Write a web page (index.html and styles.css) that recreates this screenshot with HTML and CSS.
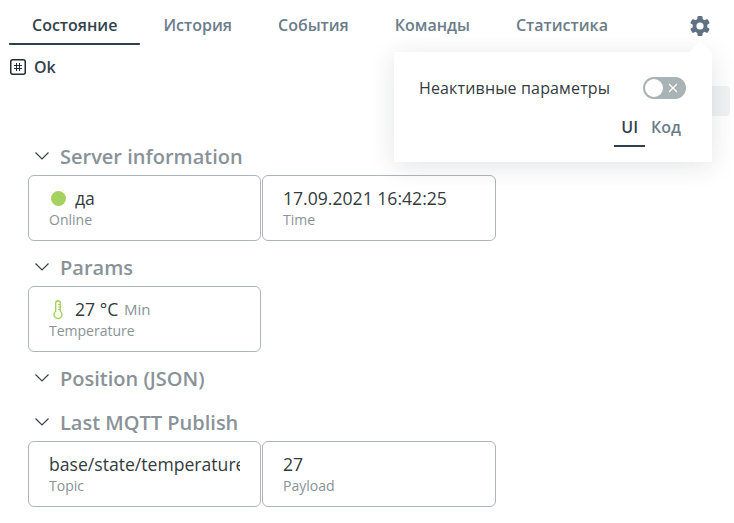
FILE: index.html
```html
<!DOCTYPE html>
<html lang="ru">
<head>
<meta charset="utf-8">
<title>Состояние</title>
<link rel="stylesheet" href="styles.css">
</head>
<body>
<div class="page">
  <nav class="tabs">
    <a class="tab active">Состояние</a>
    <a class="tab">История</a>
    <a class="tab">События</a>
    <a class="tab">Команды</a>
    <a class="tab">Статистика</a>
    <span class="gear">
      <svg width="20" height="20" viewBox="0 0 20 20"><g fill="#5f7183"><circle cx="10" cy="10" r="7.4"/><rect x="7.4" y="0" width="5.2" height="20" rx="1.2"/><rect x="7.4" y="0" width="5.2" height="20" rx="1.2" transform="rotate(60 10 10)"/><rect x="7.4" y="0" width="5.2" height="20" rx="1.2" transform="rotate(120 10 10)"/></g><circle cx="10" cy="10" r="3.6" fill="#fff"/></svg>
    </span>
  </nav>
  <div class="status">
    <svg class="status-icon" width="16" height="16" viewBox="0 0 16 16"><rect x="0.75" y="0.75" width="14.5" height="14.5" rx="2" fill="#fff" stroke="#232c33" stroke-width="1.5"/><path d="M6.5 4v8M9.5 4v8M4 6.5h8M4 9.5h8" stroke="#232c33" stroke-width="1" fill="none"/></svg>
    <span>Ok</span>
  </div>
  <main class="content">
    <section class="group">
      <h2 class="group-title"><svg class="chev" width="16" height="10" viewBox="0 0 16 10"><path d="M1.5 1.5L8 8l6.5-6.5" fill="none" stroke="#36434c" stroke-width="1.2"/></svg>Server information</h2>
      <div class="cards">
        <div class="card">
          <div class="value"><span class="dot"></span>да</div>
          <div class="label">Online</div>
        </div>
        <div class="card">
          <div class="value">17.09.2021 16:42:25</div>
          <div class="label">Time</div>
        </div>
      </div>
    </section>
    <section class="group">
      <h2 class="group-title"><svg class="chev" width="16" height="10" viewBox="0 0 16 10"><path d="M1.5 1.5L8 8l6.5-6.5" fill="none" stroke="#36434c" stroke-width="1.2"/></svg>Params</h2>
      <div class="cards">
        <div class="card">
          <div class="value">
            <svg class="thermo" width="12" height="20" viewBox="0 0 12 20"><path d="M3.7 11.2V3a2.3 2.3 0 0 1 4.6 0v8.2a4 4 0 1 1-4.6 0z" fill="none" stroke="#a5d15f" stroke-width="1.4"/><path d="M6 4.5h2M6 7h2M6 9.5h2" stroke="#a5d15f" stroke-width="1"/></svg>27 °C <span class="unit">Min</span>
          </div>
          <div class="label">Temperature</div>
        </div>
      </div>
    </section>
    <section class="group">
      <h2 class="group-title"><svg class="chev" width="16" height="10" viewBox="0 0 16 10"><path d="M1.5 1.5L8 8l6.5-6.5" fill="none" stroke="#36434c" stroke-width="1.2"/></svg>Position (JSON)</h2>
    </section>
    <section class="group">
      <h2 class="group-title"><svg class="chev" width="16" height="10" viewBox="0 0 16 10"><path d="M1.5 1.5L8 8l6.5-6.5" fill="none" stroke="#36434c" stroke-width="1.2"/></svg>Last MQTT Publish</h2>
      <div class="cards">
        <div class="card">
          <div class="value clip">base/state/temperature</div>
          <div class="label">Topic</div>
        </div>
        <div class="card">
          <div class="value">27</div>
          <div class="label">Payload</div>
        </div>
      </div>
    </section>
  </main>
  <div class="stub"></div>
  <aside class="popover">
    <div class="arrow"></div>
    <div class="pop-row">
      <span class="pop-label">Неактивные параметры</span>
      <span class="toggle"><span class="knob"></span><svg width="10" height="10" viewBox="0 0 10 10"><path d="M1 1l8 8M9 1l-8 8" stroke="#fff" stroke-width="1.2"/></svg></span>
    </div>
    <div class="pop-tabs">
      <a class="pop-tab active">UI</a>
      <a class="pop-tab">Код</a>
    </div>
  </aside>
</div>
</body>
</html>
```
FILE: styles.css
```css
* { box-sizing: border-box; }
html, body { margin: 0; padding: 0; background: #fff; }
body {
  font-family: "Open Sans", "Liberation Sans", sans-serif;
  color: #2f3a42;
  overflow: hidden;
}
.page { position: relative; width: 734px; height: 523px; overflow: hidden; }

.tabs { display: flex; align-items: stretch; height: 45px; padding-left: 9px; }
.tab {
  padding: 13px 23px 0;
  height: 45px;
  font-size: 16px;
  line-height: 24px;
  font-weight: 600;
  color: #6b7c8a;
  white-space: nowrap;
}
.tab.active { color: #33424d; border-bottom: 2px solid #2f3e49; border-radius: 1px; }
.gear { margin-left: auto; margin-right: 24px; padding-top: 16px; line-height: 0; }

.status {
  display: flex; align-items: center; gap: 8px;
  height: 24px; margin-top: 10px; padding-left: 10px;
  font-size: 16px; font-weight: 600; color: #33424d;
}

.content { padding: 60px 0 0 28px; }
.group { margin-bottom: 8px; }
.group-title {
  display: flex; align-items: center;
  height: 36px; margin: 0; padding-bottom: 2px;
  font-size: 20px; font-weight: 600; color: #899298;
}
.chev { margin: 0 10px 0 6px; flex: none; }
.cards { display: flex; gap: 1px; padding-bottom: 1px; }
.card {
  width: 233px; height: 66px;
  padding: 10px 20px 0;
  border: 1px solid #aeb4b8;
  border-radius: 6px;
  background: #fff;
}
.card:nth-child(2) { width: 234px; }
.value {
  display: flex; align-items: center;
  height: 25px;
  font-size: 17.6px; line-height: 25px;
  color: #333b40;
  white-space: pre;
}
.clip { overflow: hidden; }
.label { font-size: 14px; line-height: 17px; color: #899298; }
.dot {
  width: 15px; height: 15px; border-radius: 50%;
  background: #a5d15f; margin: 0 9px 0 2px; flex: none;
}
.thermo { margin: 0 11px 0 3px; flex: none; }
.unit { font-size: 15px; color: #899298; margin-left: 1px; }

.stub {
  position: absolute; left: 700px; top: 86px;
  width: 30px; height: 30px;
  background: #f1f2f3; border-radius: 4px;
}
.popover {
  position: absolute; left: 394px; top: 52px;
  width: 318px; height: 110px;
  background: #fff;
  box-shadow: 0 4px 24px rgba(40, 50, 60, 0.13);
  padding: 24px 26px 0 25px;
  color: #333b40;
}
.arrow {
  position: absolute; right: 5px; top: -8px;
  width: 14px; height: 14px;
  background: #fff;
  transform: rotate(45deg);
}
.pop-row {
  position: relative;
  display: flex; justify-content: space-between; align-items: center;
  height: 24px; font-size: 16px;
}
.pop-label { letter-spacing: 0.15px; }
.toggle {
  display: flex; align-items: center; justify-content: flex-end;
  width: 43px; height: 22px; padding: 0 8px 0 0;
  border-radius: 11px; background: #a9b3b6;
  position: relative;
}
.knob {
  position: absolute; left: 2px; top: 2px;
  width: 18px; height: 18px; border-radius: 50%; background: #fff;
}
.pop-tabs { display: flex; justify-content: flex-end; margin: 12px -1px 0 0; }
.pop-tab {
  height: 35px; padding: 3px 6px 0;
  font-size: 16px; line-height: 24px; font-weight: 600; color: #6b7c8a;
}
.pop-tab.active { color: #33424d; border-bottom: 2px solid #2f3e49; padding: 3px 7px 0; }
```
